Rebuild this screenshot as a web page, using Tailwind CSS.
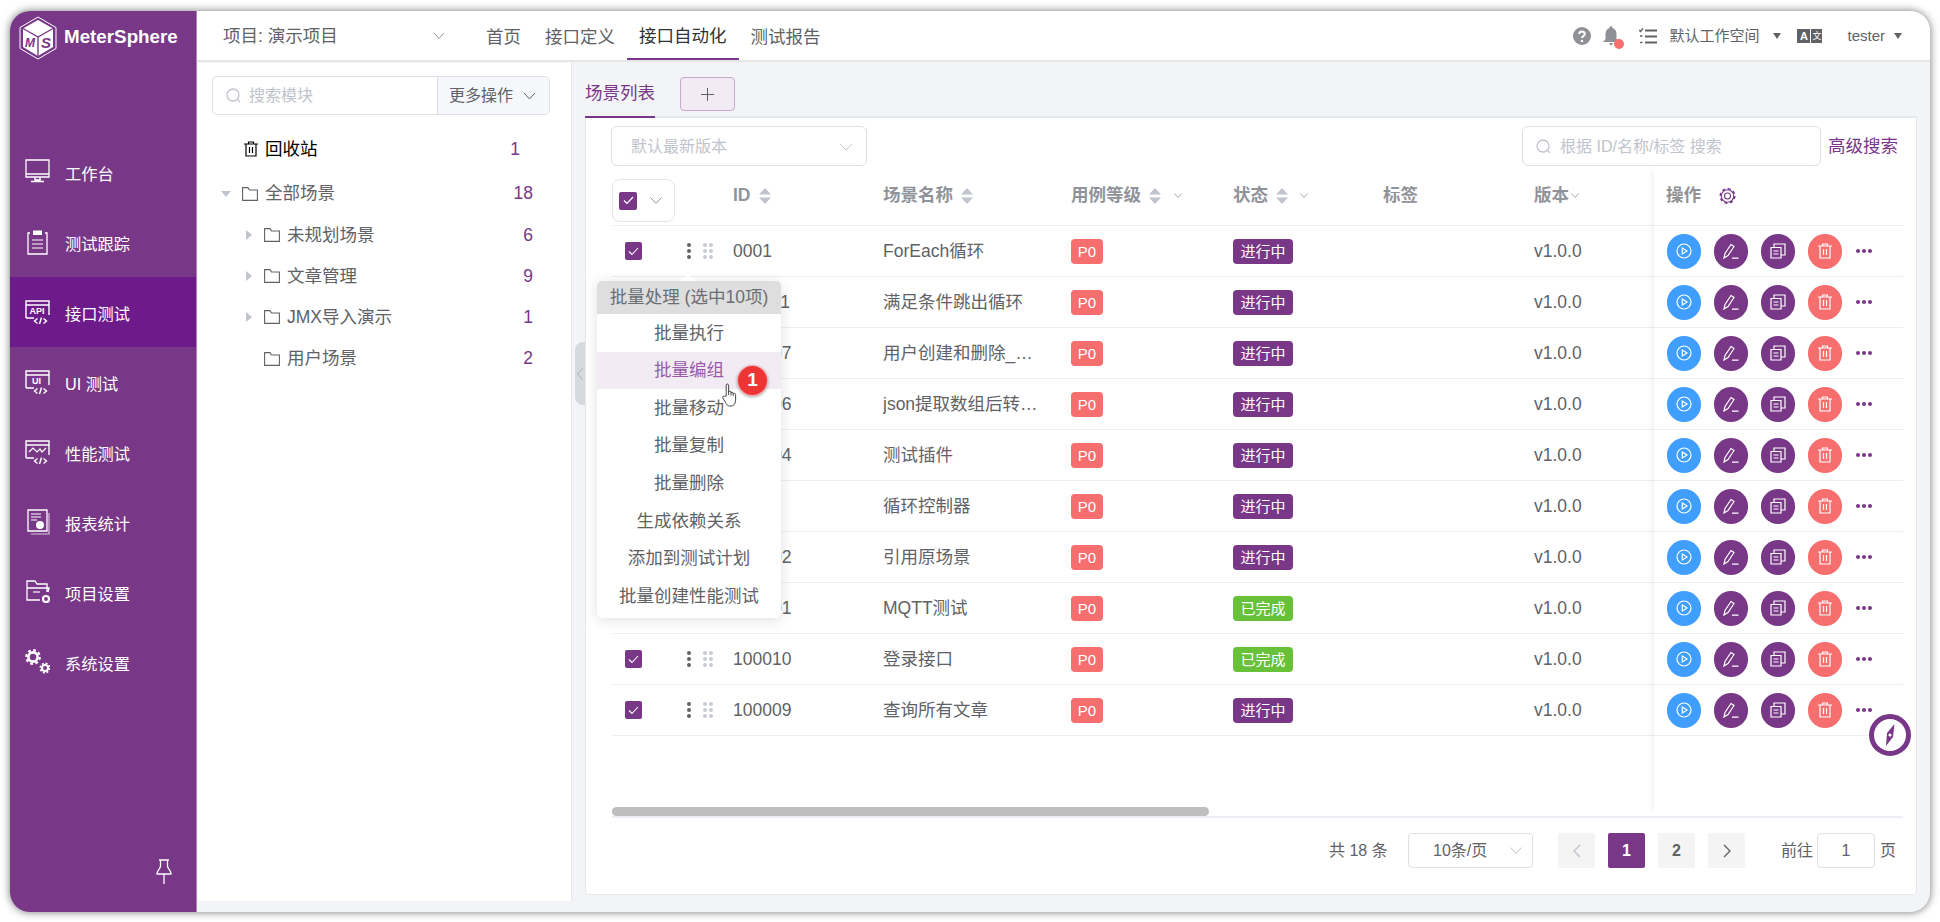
<!DOCTYPE html>
<html lang="zh-CN">
<head>
  <meta charset="UTF-8" />
  <title>MeterSphere</title>
  <script src="https://cdn.jsdelivr.net/npm/@tailwindcss/browser@4"></script>
</head>
<body class="bg-white overflow-hidden font-['Liberation_Sans','Noto_Sans_CJK_SC',sans-serif] text-[17.5px] text-[#606266]">
<div class="w-[1940px] h-[922px] pt-[11px] pl-[10px]">
  <div class="w-[1920px] h-[901px] rounded-[20px] overflow-hidden flex shadow-[0_0_9px_rgba(0,0,0,0.55)] bg-[#f3f4f7]">

    <!-- 侧边栏 -->
    <aside class="w-[187px] shrink-0 bg-[#783887] flex flex-col text-white text-[16.25px] border-r border-[#a988b0]">
      <div class="h-[126px] shrink-0 flex items-start pt-[5px] pl-[9px]">
        <svg class="w-[38px] h-[44px]" viewBox="0 0 38 44">
          <path d="M19 1 L37 11.5 V32.5 L19 43 L1 32.5 V11.5 Z" fill="none" stroke="#fff" stroke-width="1"/>
          <path d="M19 4 L34 12.5 V31 L19 40 L4 31 V12.5 Z" fill="#fff"/>
          <path d="M4 12.5 L19 21 L34 12.5 M19 21 V40" fill="none" stroke="#783887" stroke-width="1.4"/>
          <text x="6" y="31" font-size="12" font-weight="700" font-style="italic" fill="#783887" font-family="Liberation Sans">M</text>
          <text x="22" y="32" font-size="15" font-weight="700" font-style="italic" fill="#783887" font-family="Liberation Sans">S</text>
        </svg>
        <span class="ml-[7px] mt-[7px] text-[18.8px] font-bold leading-[28px]">MeterSphere</span>
      </div>
      <div id="nav"></div>
      <div class="mt-auto h-[53px] flex justify-end pr-[24px]">
        <svg class="w-[16px] h-[25px]" viewBox="0 0 16 25" fill="none" stroke="#fff" stroke-width="1.3">
          <path d="M3 1 H13 M4.5 1 V7 C4.5 10 1 11 1 15 H15 C15 11 11.5 10 11.5 7 V1 M8 15 V25"/>
        </svg>
      </div>
    </aside>

    <div class="flex-1 min-w-0 flex flex-col">
      <!-- 顶部栏 -->
      <header class="h-[51px] shrink-0 bg-white border-b-2 border-[#e6e6e6] flex items-stretch pl-[26px] pr-[28px]">
        <div class="w-[251px] flex items-center justify-between pr-[29px] pt-[1px]">
          <span>项目: 演示项目</span>
          <svg class="w-[12px] h-[8px]" viewBox="0 0 12 8" fill="none" stroke="#909399"><path d="M1 1 L6 6.5 L11 1"/></svg>
        </div>
        <nav class="flex items-stretch">
          <a class="px-[12px] flex items-center pt-[3px]">首页</a>
          <a class="px-[12px] flex items-center pt-[3px]">接口定义</a>
          <a class="px-[12px] flex items-center pt-[3px] border-b-2 border-[#783887] text-[#303133]">接口自动化</a>
          <a class="px-[12px] flex items-center pt-[3px]">测试报告</a>
        </nav>
        <div class="ml-auto flex items-center pt-[1px] text-[15px]">
          <svg class="w-[18px] h-[18px]" viewBox="0 0 18 18"><circle cx="9" cy="9" r="9" fill="#8f9196"/><path d="M6.2 7 C6.2 3.6 11.8 3.6 11.8 7 C11.8 9 9 9 9 11" fill="none" stroke="#fff" stroke-width="2"/><circle cx="9" cy="14" r="1.3" fill="#fff"/></svg>
          <span class="relative ml-[12px] w-[16px] h-[20px]">
            <svg class="w-[16px] h-[20px]" viewBox="0 0 16 20"><path d="M8 0 C9 0 9.5 1 9.5 2 C12.5 3 13.5 5.5 13.5 8 V13 L16 16 H0 L2.5 13 V8 C2.5 5.5 3.5 3 6.5 2 C6.5 1 7 0 8 0 Z M6 17 H10 L8 20 Z" fill="#8f9196"/></svg>
            <span class="absolute left-[11px] top-[13px] w-[10px] h-[10px] rounded-full bg-[#f76e6e]"></span>
          </span>
          <svg class="ml-[20px] w-[18px] h-[17px]" viewBox="0 0 18 17" fill="none" stroke="#606266" stroke-width="2"><path d="M6 2.5 H18 M6 8.5 H18 M6 14.5 H18"/><path d="M0 2 L1.5 3.5 L4 0.5 M1 8 H3.5 M1 14.5 H3.5" stroke-width="1.5"/></svg>
          <span class="ml-[12px] w-[90px] whitespace-nowrap">默认工作空间</span>
          <span class="ml-[14px] w-0 h-0 border-x-[4.5px] border-x-transparent border-t-[6px] border-t-[#606266]"></span>
          <span class="ml-[16px] flex h-[14px]">
            <span class="w-[13px] bg-[#606266] text-white text-[11px] leading-[14px] font-bold text-center">A</span>
            <span class="ml-px w-[11px] bg-[#606266] text-white text-[9px] leading-[14px] text-center">文</span>
          </span>
          <span class="ml-[25px]">tester</span>
          <span class="ml-[9px] w-0 h-0 border-x-[4.5px] border-x-transparent border-t-[6px] border-t-[#606266]"></span>
        </div>
      </header>

      <div class="flex-1 min-h-0 flex">
        <!-- 模块树 -->
        <section class="ml-px mt-px mb-[11px] w-[374px] shrink-0 bg-white border-r border-[#e6e6e6] pt-[13px]">
          <div class="ml-[14px] w-[338px] h-[39px] flex border border-[#dcdfe6] rounded-[5px] text-[16px]">
            <div class="flex-1 flex items-center pl-[13px] text-[#c0c4cc]">
              <svg class="w-[15px] h-[15px]" viewBox="0 0 15 15" fill="none" stroke="#c0c4cc" stroke-width="1.3"><circle cx="7" cy="7" r="6"/><path d="M11.5 11.5 L14 14"/></svg>
              <span class="ml-[8px]">搜索模块</span>
            </div>
            <div class="w-[112px] flex items-center pl-[11px] bg-[#f5f7fa] border-l border-[#dcdfe6] rounded-r-[5px]">
              <span>更多操作</span>
              <svg class="ml-[10px] w-[13px] h-[8px]" viewBox="0 0 13 8" fill="none" stroke="#606266"><path d="M1 1 L6.5 7 L12 1"/></svg>
            </div>
          </div>
          <div id="tree" class="mt-[13px]"></div>
        </section>

        <!-- 主内容 -->
        <main class="relative flex-1 min-w-0 px-[13px] pb-[17px] flex flex-col">
          <div class="absolute left-[3px] top-[280px] w-[10px] h-[63px] bg-[#d5dadf] rounded-l-[8px] flex items-center justify-center">
            <svg class="w-[6px] h-[12px]" viewBox="0 0 6 12" fill="none" stroke="#a9aeb5"><path d="M5.5 .5 L.5 6 L5.5 11.5"/></svg>
          </div>

          <div class="h-[56px] shrink-0 flex border-b-2 border-[#e4e7ed]">
            <div class="h-[56px] border-b-2 border-[#783887] text-[#783887] flex items-center pt-[8px]">场景列表</div>
            <div class="ml-[25px] mt-[15px] w-[55px] h-[34px] border border-[#c9a7d1] bg-[#f2ebf3] rounded-[4px] flex items-center justify-center">
              <svg class="w-[13px] h-[13px]" viewBox="0 0 13 13" stroke="#606266"><path d="M6.5 0 V13 M0 6.5 H13"/></svg>
            </div>
          </div>

          <div class="flex-1 min-h-0 bg-white border border-t-0 border-[#e6e6e6] rounded-b-[5px] pl-[26px] pr-[13px] pt-[8px]">
            <div class="h-[40px] flex items-stretch text-[16px]">
              <div class="-ml-px w-[256px] border border-[#dcdfe6] rounded-[6px] flex items-center justify-between pl-[19px] pr-[13px] pt-[1px] text-[#c0c4cc]">
                <span>默认最新版本</span>
                <svg class="w-[14px] h-[8px]" viewBox="0 0 14 8" fill="none" stroke="#c0c4cc"><path d="M1 1 L7 7 L13 1"/></svg>
              </div>
              <div class="ml-auto w-[299px] border border-[#dcdfe6] rounded-[6px] flex items-center pl-[13px] pt-[1px] text-[#c0c4cc]">
                <svg class="w-[15px] h-[15px]" viewBox="0 0 15 15" fill="none" stroke="#c0c4cc" stroke-width="1.3"><circle cx="7" cy="7" r="6"/><path d="M11.5 11.5 L14 14"/></svg>
                <span class="ml-[9px]">根据 ID/名称/标签 搜索</span>
              </div>
              <a class="ml-[7px] mr-[5px] text-[17.5px] text-[#783887] flex items-center pt-[1px]">高级搜索</a>
            </div>

            <!-- 表格 -->
            <div class="relative h-[652px] flex border-b-2 border-[#ebeef5]">
              <div class="relative flex-1 min-w-0">
                <div class="h-[60px] flex border-b border-[#ebeef5] font-bold text-[#909399]">
                  <div class="w-[61px] shrink-0 pt-[13px]">
                    <div class="w-[63px] h-[43px] border border-[#e6e6e6] rounded-[8px] flex items-center pl-[6px]">
                      <span class="w-[18px] h-[18px] bg-[#783887] rounded-[2px] flex items-center justify-center">
                        <svg class="w-[11px] h-[9px]" viewBox="0 0 11 9" fill="none" stroke="#fff" stroke-width="1.2"><path d="M1 4.5 L4 7.5 L10 1"/></svg>
                      </span>
                      <svg class="ml-[13px] w-[12px] h-[7px]" viewBox="0 0 12 7" fill="none" stroke="#909399"><path d="M.5 .5 L6 6.5 L11.5 .5"/></svg>
                    </div>
                  </div>
                  <div class="w-[50px] shrink-0"></div>
                  <div class="w-[150px] shrink-0 pl-[10px] flex items-center gap-[8px]">ID <svg class="w-[12px] h-[16px]" viewBox="0 0 12 16" fill="#c0c4cc"><path d="M6 0 L12 6.5 H0 Z M6 16 L12 9.5 H0 Z"/></svg></div>
                  <div class="w-[188px] shrink-0 pl-[10px] flex items-center gap-[8px]">场景名称 <svg class="w-[12px] h-[16px]" viewBox="0 0 12 16" fill="#c0c4cc"><path d="M6 0 L12 6.5 H0 Z M6 16 L12 9.5 H0 Z"/></svg></div>
                  <div class="w-[162px] shrink-0 pl-[10px] flex items-center gap-[8px]">用例等级 <svg class="w-[12px] h-[16px]" viewBox="0 0 12 16" fill="#c0c4cc"><path d="M6 0 L12 6.5 H0 Z M6 16 L12 9.5 H0 Z"/></svg>
                    <svg class="ml-[5px] w-[8px] h-[5px]" viewBox="0 0 8 5" fill="none" stroke="#909399" stroke-width=".8"><path d="M.5 .5 L4 4.5 L7.5 .5"/></svg></div>
                  <div class="w-[150px] shrink-0 pl-[10px] flex items-center gap-[8px]">状态 <svg class="w-[12px] h-[16px]" viewBox="0 0 12 16" fill="#c0c4cc"><path d="M6 0 L12 6.5 H0 Z M6 16 L12 9.5 H0 Z"/></svg>
                    <svg class="ml-[4px] w-[8px] h-[5px]" viewBox="0 0 8 5" fill="none" stroke="#909399" stroke-width=".8"><path d="M.5 .5 L4 4.5 L7.5 .5"/></svg></div>
                  <div class="w-[151px] shrink-0 pl-[10px] flex items-center">标签</div>
                  <div class="w-[130px] shrink-0 pl-[10px] flex items-center gap-[2px]">版本<svg class="w-[8px] h-[5px]" viewBox="0 0 8 5" fill="none" stroke="#909399" stroke-width=".8"><path d="M.5 .5 L4 4.5 L7.5 .5"/></svg></div>
                </div>
                <div id="rows"></div>
                <div class="absolute left-0 bottom-0 w-[597px] h-[9px] rounded-[5px] bg-[#bebebe]"></div>
              </div>

              <!-- 固定操作列 -->
              <div class="relative z-10 w-[249px] shrink-0 bg-white shadow-[-7px_0_7px_-5px_rgba(0,0,0,0.06)]">
                <div class="h-[60px] pl-[12px] flex items-center border-b border-[#ebeef5] font-bold text-[#909399]">
                  <span>操作</span>
                  <svg class="ml-[18px] w-[17px] h-[18px]" viewBox="0 0 17 18" fill="none" stroke="#783887"><circle cx="8.5" cy="9" r="6.2" stroke-width="1.1"/><circle cx="8.5" cy="9" r="7.2" stroke-width="1.6" stroke-dasharray="3 2.65"/><circle cx="8.5" cy="9" r="3" stroke-width="1.1"/></svg>
                </div>
                <div id="ops"></div>
              </div>

              <!-- 指南针悬浮按钮 -->
              <div class="absolute z-20 left-[1257px] top-[548px] w-[42px] h-[42px] rounded-full border-[5px] border-[#783887] bg-white flex items-center justify-center">
                <svg class="w-[16px] h-[24px]" viewBox="0 0 16 24" fill="#783887"><path d="M12.5 1 L11 14 L4 23 L5 10 Z"/><circle cx="8" cy="12" r="1.6" fill="#fff"/></svg>
              </div>

              <!-- 批量操作下拉 -->
              <div class="absolute z-30 left-[-15px] top-[115px] w-[184px] h-[337px] bg-white rounded-[5px] shadow-[0_2px_14px_rgba(0,0,0,0.13)]">
                <div class="absolute left-[86px] top-[-5px] w-[10px] h-[10px] rotate-45 bg-white"></div>
                <div class="relative h-[33px] bg-[#dedede] rounded-t-[5px] flex items-center justify-center text-[17.5px] whitespace-nowrap text-[#6b6e73]">批量处理 (选中10项)</div>
                <div id="menu"></div>
                <span class="absolute left-[140px] top-[84px] w-[31px] h-[31px] rounded-full bg-[#ee3535] border border-white/60 text-white font-bold text-[19px] flex items-center justify-center shadow-[0_1px_3px_rgba(0,0,0,0.35)]">1</span>
                <svg class="absolute left-[125px] top-[102px] w-[16px] h-[24px]" viewBox="0 0 16 24">
                  <path d="M4.2 13 V2.2 C4.2 .6 6.6 .6 6.6 2.2 V9 C6.6 7.8 9 7.8 9 9 V10 C9 9 11.2 9 11.2 10.2 V11 C11.2 10 13.6 10 13.6 11.4 V17 C13.6 20 12 23 9 23 H7.5 C5 23 4 20 2 17 L.8 15 C0 13.4 1.8 12.4 2.8 13.4 Z M6.6 9 V12 M9 10 V12.5 M11.2 11 V13" fill="#fff" stroke="#333" stroke-width=".9"/>
                </svg>
              </div>
            </div>

            <!-- 分页 -->
            <div class="mt-[15px] h-[35px] flex items-stretch text-[16px]">
              <div class="ml-[717px] w-[61px] flex items-center whitespace-nowrap">共 18 条</div>
              <div class="ml-[18px] w-[125px] border border-[#dcdfe6] rounded-[4px] flex items-center justify-between pl-[24px] pr-[10px]">
                <span>10条/页</span>
                <svg class="w-[12px] h-[7px]" viewBox="0 0 12 7" fill="none" stroke="#c0c4cc"><path d="M.5 .5 L6 6.5 L11.5 .5"/></svg>
              </div>
              <div class="ml-[25px] w-[37px] bg-[#f4f4f5] rounded-[2px] flex items-center justify-center">
                <svg class="w-[8px] h-[14px]" viewBox="0 0 8 14" fill="none" stroke="#c0c4cc" stroke-width="1.4"><path d="M7 1 L1 7 L7 13"/></svg>
              </div>
              <div class="ml-[13px] w-[37px] bg-[#783887] text-white font-bold rounded-[2px] flex items-center justify-center">1</div>
              <div class="ml-[13px] w-[37px] bg-[#f4f4f5] font-bold rounded-[2px] flex items-center justify-center">2</div>
              <div class="ml-[13px] w-[37px] bg-[#f4f4f5] rounded-[2px] flex items-center justify-center">
                <svg class="w-[8px] h-[14px]" viewBox="0 0 8 14" fill="none" stroke="#606266" stroke-width="1.4"><path d="M1 1 L7 7 L1 13"/></svg>
              </div>
              <div class="ml-[36px] flex items-center">前往</div>
              <div class="ml-[4px] w-[58px] border border-[#dcdfe6] rounded-[4px] flex items-center justify-center">1</div>
              <div class="ml-[5px] flex items-center">页</div>
            </div>
          </div>
        </main>
      </div>
    </div>
  </div>
</div>

<script>
  const win = '<path d="M1 16 V2 H24 V16 M1 6 H24 M1 19 H9 M1 16 V19" fill="none" stroke="#fff" stroke-width="1.4"/><path d="M12.5 19.5 L9.5 22 L12.5 24.5 M18.5 19.5 L21.5 22 L18.5 24.5 M16.5 18.5 L14.5 25" fill="none" stroke="#fff" stroke-width="1.4"/>';
  const navItems = [
    ["工作台", '<path d="M1 1 H24 V18 H1 Z M1 15 H24" fill="none" stroke="#fff" stroke-width="1.3"/><path d="M10 18 V21 H15 V18 M6 22.5 H19" fill="none" stroke="#fff" stroke-width="1.5"/>'],
    ["测试跟踪", '<path d="M5 4 H3 V25 H22 V4 H20" fill="none" stroke="#fff" stroke-width="1.3"/><path d="M8 1.5 H17 V6 H8 Z" fill="#fff"/><path d="M7 11 H18 M7 15 H18 M7 19 H18" stroke="#fff" stroke-width="1.2"/>'],
    ["接口测试", win + '<text x="4.5" y="14.5" font-size="9" font-weight="700" fill="#fff" font-family="Liberation Sans">API</text>', true],
    ["UI 测试", win + '<text x="7" y="14.5" font-size="9" font-weight="700" fill="#fff" font-family="Liberation Sans">UI</text>'],
    ["性能测试", win + '<path d="M4 13 L8 9 L12 13 L15 10 L17 13 L21 9" fill="none" stroke="#fff" stroke-width="1.2"/>'],
    ["报表统计", '<path d="M3 1 H22 V22 H3 Z" fill="none" stroke="#fff" stroke-width="1.3"/><path d="M24 4 V25 H6" fill="none" stroke="#d9c6dd" stroke-width="1.2"/><path d="M6 5 H16 M6 8 H16 M6 11 H12" stroke="#fff" stroke-width="1.2"/><circle cx="15" cy="16" r="4" fill="#fff"/>'],
    ["项目设置", '<path d="M2 9 V2 H10 L12 5 H22 V13 M2 9 H24 L23 13 M2 9 V21 H15" fill="none" stroke="#fff" stroke-width="1.3"/><path d="M8 13 H15" stroke="#fff" stroke-width="1.2"/><circle cx="21" cy="20" r="3" fill="none" stroke="#fff" stroke-width="2.2"/>'],
    ["系统设置", '<circle cx="8" cy="8" r="4.6" fill="none" stroke="#fff" stroke-width="2.6"/><circle cx="8" cy="8" r="6.8" fill="none" stroke="#fff" stroke-width="2.2" stroke-dasharray="2.8 2.54"/><circle cx="20" cy="19" r="3" fill="none" stroke="#fff" stroke-width="2"/><circle cx="20" cy="19" r="4.6" fill="none" stroke="#fff" stroke-width="1.8" stroke-dasharray="2 1.6"/>'],
  ];
  document.getElementById("nav").innerHTML = navItems.map(([label, icon, active]) => `
    <div class="h-[70px] flex items-center pl-[15px] ${active ? "bg-[#6d1a8a]" : ""}">
      <svg class="w-[25px] h-[26px] shrink-0" viewBox="0 0 25 26">${icon}</svg>
      <span class="ml-[15px] mt-[4px]">${label}</span>
    </div>`).join("");

  const folder = '<svg class="w-[16px] h-[14px] shrink-0" viewBox="0 0 16 14" fill="none" stroke="#606266" stroke-width="1.1"><path d="M.6 .6 H6 L7.5 3 H15.4 V13.4 H.6 Z"/></svg>';
  const caretRight = '<span class="w-0 h-0 border-y-[5px] border-y-transparent border-l-[6px] border-l-[#c0c4cc]"></span>';
  const caretDown = '<span class="w-0 h-0 border-x-[5px] border-x-transparent border-t-[6px] border-t-[#c0c4cc]"></span>';
  const treeRows = [
    [caretRight, "未规划场景", 6], [caretRight, "文章管理", 9], [caretRight, "JMX导入演示", 1], ["", "用户场景", 2],
  ];
  document.getElementById("tree").innerHTML = `
    <div class="h-[42px] flex items-center pl-[46px] pr-[51px] text-black">
      <svg class="w-[14px] h-[16px]" viewBox="0 0 14 16" fill="none" stroke="#000" stroke-width="1.2"><path d="M0 3 H14 M4.5 3 V1 H9.5 V3 M2 3 V15 H12 V3 M5.5 6 V12 M8.5 6 V12"/></svg>
      <span class="ml-[7px]">回收站</span>
      <span class="ml-auto text-[#783887]">1</span>
    </div>
    <div class="mt-[3px] h-[41px] flex items-center pl-[23px] pr-[38px]">
      <span class="w-[10px] flex">${caretDown}</span>
      <span class="ml-[11px]">${folder}</span>
      <span class="ml-[7px]">全部场景</span>
      <span class="ml-auto text-[#783887]">18</span>
    </div>` + treeRows.map(([caret, label, count]) => `
    <div class="h-[41.3px] flex items-center pl-[48px] pr-[38px]">
      <span class="w-[6px] flex">${caret}</span>
      <span class="ml-[12px]">${folder}</span>
      <span class="ml-[7px]">${label}</span>
      <span class="ml-auto text-[#783887]">${count}</span>
    </div>`).join("");

  const rows = [
    ["0001", "ForEach循环", 0], ["100011", "满足条件跳出循环", 0], ["100007", "用户创建和删除_测试用例", 0],
    ["100006", "json提取数组后转换处理", 0], ["100004", "测试插件", 0], ["0003", "循环控制器", 0],
    ["100002", "引用原场景", 0], ["100001", "MQTT测试", 1], ["100010", "登录接口", 1], ["100009", "查询所有文章", 0],
  ];
  document.getElementById("rows").innerHTML = rows.map(([id, name, done]) => `
    <div class="h-[51px] flex items-center border-b border-[#ebeef5]">
      <div class="w-[61px] shrink-0 pl-[13px]">
        <span class="w-[17px] h-[18px] bg-[#783887] rounded-[2px] flex items-center justify-center">
          <svg class="w-[11px] h-[9px]" viewBox="0 0 11 9" fill="none" stroke="#fff" stroke-width="1.1"><path d="M1 4.5 L4 7.5 L10 1"/></svg>
        </span>
      </div>
      <div class="w-[50px] shrink-0 pl-[14px] flex items-center">
        <span class="flex flex-col gap-[2px]"><i class="w-[4px] h-[4px] rounded-full bg-[#606266]"></i><i class="w-[4px] h-[4px] rounded-full bg-[#606266]"></i><i class="w-[4px] h-[4px] rounded-full bg-[#606266]"></i></span>
        <span class="ml-[12px] grid grid-cols-2 gap-[2px]"><i class="w-[4px] h-[4px] rounded-full bg-[#c8ccd2]"></i><i class="w-[4px] h-[4px] rounded-full bg-[#c8ccd2]"></i><i class="w-[4px] h-[4px] rounded-full bg-[#c8ccd2]"></i><i class="w-[4px] h-[4px] rounded-full bg-[#c8ccd2]"></i><i class="w-[4px] h-[4px] rounded-full bg-[#c8ccd2]"></i><i class="w-[4px] h-[4px] rounded-full bg-[#c8ccd2]"></i></span>
      </div>
      <div class="w-[150px] shrink-0 pl-[10px]">${id}</div>
      <div class="w-[188px] shrink-0 pl-[10px]"><div class="w-[156px] truncate">${name}</div></div>
      <div class="w-[162px] shrink-0 pl-[10px]"><span class="block w-[32px] h-[25px] rounded-[4px] bg-[#f76e6e] text-white text-[15px] leading-[25px] text-center">P0</span></div>
      <div class="w-[150px] shrink-0 pl-[10px]"><span class="block w-[60px] h-[25px] rounded-[4px] ${done ? "bg-[#67c23a]" : "bg-[#783887]"} text-white text-[15px] leading-[25px] text-center">${done ? "已完成" : "进行中"}</span></div>
      <div class="w-[151px] shrink-0"></div>
      <div class="w-[130px] shrink-0 pl-[10px]">v1.0.0</div>
    </div>`).join("");

  const ops = `
    <div class="h-[51px] pl-[13px] flex items-center gap-[13px] border-b border-[#ebeef5]">
      <span class="w-[34px] h-[35px] rounded-full bg-[#409eff] flex items-center justify-center">
        <svg class="w-[16px] h-[16px]" viewBox="0 0 16 16" fill="none" stroke="#fff" stroke-width="1.2"><circle cx="8" cy="8" r="7"/><path d="M6.3 5 L11 8 L6.3 11 Z"/></svg>
      </span>
      <span class="w-[34px] h-[35px] rounded-full bg-[#783887] flex items-center justify-center">
        <svg class="w-[16px] h-[16px]" viewBox="0 0 16 16" fill="none" stroke="#fff" stroke-width="1.2"><path d="M1 15 L2 10.5 L8 1.5 L11 3.5 L5 12.5 Z M9 15.2 H15.5"/></svg>
      </span>
      <span class="w-[34px] h-[35px] rounded-full bg-[#783887] flex items-center justify-center">
        <svg class="w-[16px] h-[16px]" viewBox="0 0 16 16" fill="none" stroke="#fff" stroke-width="1.2"><path d="M1 4.5 H11 V15 H1 Z M3.5 8 H8.5 M3.5 11 H8.5 M4 4.5 V1 H15 V12 H11"/></svg>
      </span>
      <span class="w-[34px] h-[35px] rounded-full bg-[#f76e6e] flex items-center justify-center">
        <svg class="w-[14px] h-[16px]" viewBox="0 0 14 16" fill="none" stroke="#fff" stroke-width="1.2"><path d="M0 3 H14 M4.5 3 V1 H9.5 V3 M2 3 V15 H12 V3 M5.5 6 V12 M8.5 6 V12"/></svg>
      </span>
      <span class="ml-[1px] flex gap-[2px]"><i class="w-[4px] h-[4px] rounded-full bg-[#783887]"></i><i class="w-[4px] h-[4px] rounded-full bg-[#783887]"></i><i class="w-[4px] h-[4px] rounded-full bg-[#783887]"></i></span>
    </div>`;
  document.getElementById("ops").innerHTML = ops.repeat(10);

  const menu = ["批量执行", "批量编组", "批量移动", "批量复制", "批量删除", "生成依赖关系", "添加到测试计划", "批量创建性能测试"];
  document.getElementById("menu").innerHTML = menu.map(label => `
    <div class="h-[37.6px] flex items-center justify-center ${label === "批量编组" ? "bg-[#f2ebf3] text-[#9a5aa8]" : ""}">${label}</div>`).join("");
</script>
</body>
</html>
